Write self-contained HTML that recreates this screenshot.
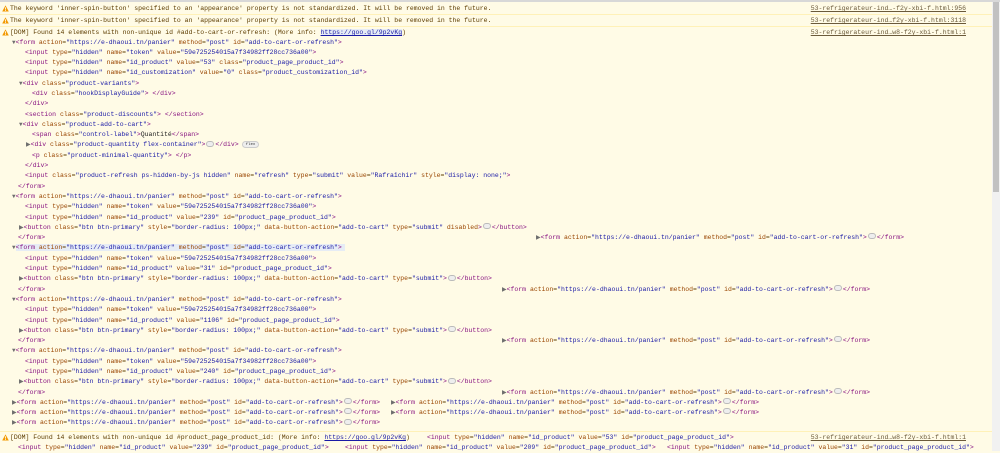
<!DOCTYPE html>
<html><head><meta charset="utf-8"><style>
*{margin:0;padding:0;box-sizing:border-box}
body{width:1000px;height:451px;overflow:hidden;background:#fffbe6;font-family:"Liberation Mono",monospace;font-size:6.48px;color:#5c3c00;position:relative}
.r{position:absolute;left:0;width:992px;height:11px;line-height:11px;white-space:pre}
.w{border-top:1px solid #fff1b8;background:#fffbe6}
.ic{position:absolute;left:2px;top:2px;width:7px;height:7px}
.lk{position:absolute;right:26px;top:0;text-decoration:underline;color:#6b5a3a}
.x{position:absolute;top:0}
.L{height:10.3px;line-height:10.3px;white-space:pre}
.L>div{white-space:pre}
b{font-weight:normal;color:#881280}
i{font-style:normal;color:#994500}
em{font-style:normal;color:#1a1aa6}
.tri{color:#6e6e6e;font-size:6px}
.dots{display:inline-block;width:8px;height:6px;border:1px solid #bbb;border-radius:3px;background:#eee;vertical-align:middle;margin:0 1px;position:relative;top:-1px}
.flex{display:inline-block;padding:0 3px;height:7px;line-height:6px;border:1px solid #ccc;border-radius:4px;background:#eee;font-size:4px;color:#333;vertical-align:middle;margin-left:3px}
.hl{background:#e6ecf5}
.sb{position:absolute;right:0;top:2px;width:8px;height:449px;background:#f1f1f1}
.sb div{position:absolute;left:1px;top:0;width:6px;height:190px;background:#c1c1c1}
</style></head><body>
<div style="position:absolute;left:0;top:0;width:1000px;height:2px;background:#d8d8d8"></div>
<svg width="0" height="0" style="position:absolute"><defs><symbol id="wi" viewBox="0 0 10 10"><path d="M5 0.5L9.7 9.3H0.3Z" fill="#f29900"/><rect x="4.4" y="3.3" width="1.2" height="3.3" fill="#fff"/><rect x="4.4" y="7.2" width="1.2" height="1.2" fill="#fff"/></symbol></defs></svg>

<div class="r" style="top:3px"><svg class="ic"><use href="#wi"/></svg><span class="x" style="left:10px">The keyword 'inner-spin-button' specified to an 'appearance' property is not standardized. It will be removed in the future.</span><span class="lk">53-refrigerateur-ind…-f2y-xbi-f.html:956</span></div>
<div class="r w" style="top:14px"><svg class="ic"><use href="#wi"/></svg><span class="x" style="left:10px">The keyword 'inner-spin-button' specified to an 'appearance' property is not standardized. It will be removed in the future.</span><span class="lk">53-refrigerateur-ind…f2y-xbi-f.html:3118</span></div>
<div class="r w" style="top:26px;height:12px"><svg class="ic"><use href="#wi"/></svg><span class="x" style="left:10px">[DOM] Found 14 elements with non-unique id #add-to-cart-or-refresh: (More info: <span class="hl" style="text-decoration:underline;color:#1a1aa6">https://goo.gl/9p2vKg</span>)</span><span class="lk">53-refrigerateur-ind…w8-f2y-xbi-f.html:1</span></div>

<div style="position:absolute;left:0;top:37.5px;width:992px">
<div class="L" style="padding-left:12px"><span class="tri">▼</span><b>&lt;form</b> <i>action</i>=<em>"https://e-dhaoui.tn/panier"</em> <i>method</i>=<em>"post"</em> <i>id</i>=<em>"add-to-cart-or-refresh"</em><b>&gt;</b></div>
<div class="L" style="padding-left:25px"><b>&lt;input</b> <i>type</i>=<em>"hidden"</em> <i>name</i>=<em>"token"</em> <i>value</i>=<em>"59e725254015a7f34982ff28cc736a00"</em><b>&gt;</b></div>
<div class="L" style="padding-left:25px"><b>&lt;input</b> <i>type</i>=<em>"hidden"</em> <i>name</i>=<em>"id_product"</em> <i>value</i>=<em>"53"</em> <i>class</i>=<em>"product_page_product_id"</em><b>&gt;</b></div>
<div class="L" style="padding-left:25px"><b>&lt;input</b> <i>type</i>=<em>"hidden"</em> <i>name</i>=<em>"id_customization"</em> <i>value</i>=<em>"0"</em> <i>class</i>=<em>"product_customization_id"</em><b>&gt;</b></div>
<div class="L" style="padding-left:19px"><span class="tri">▼</span><b>&lt;div</b> <i>class</i>=<em>"product-variants"</em><b>&gt;</b></div>
<div class="L" style="padding-left:32px"><b>&lt;div</b> <i>class</i>=<em>"hookDisplayGuide"</em><b>&gt;</b> <b>&lt;/div&gt;</b></div>
<div class="L" style="padding-left:25px"><b>&lt;/div&gt;</b></div>
<div class="L" style="padding-left:25px"><b>&lt;section</b> <i>class</i>=<em>"product-discounts"</em><b>&gt;</b> <b>&lt;/section&gt;</b></div>
<div class="L" style="padding-left:19px"><span class="tri">▼</span><b>&lt;div</b> <i>class</i>=<em>"product-add-to-cart"</em><b>&gt;</b></div>
<div class="L" style="padding-left:32px"><b>&lt;span</b> <i>class</i>=<em>"control-label"</em><b>&gt;</b><span style="color:#222">Quantité</span><b>&lt;/span&gt;</b></div>
<div class="L" style="padding-left:26px"><span class="tri">▶</span><b>&lt;div</b> <i>class</i>=<em>"product-quantity flex-container"</em><b>&gt;</b><span class="dots"></span><b>&lt;/div&gt;</b><span class="flex">flex</span></div>
<div class="L" style="padding-left:32px"><b>&lt;p</b> <i>class</i>=<em>"product-minimal-quantity"</em><b>&gt;</b> <b>&lt;/p&gt;</b></div>
<div class="L" style="padding-left:25px"><b>&lt;/div&gt;</b></div>
<div class="L" style="padding-left:25px"><b>&lt;input</b> <i>class</i>=<em>"product-refresh ps-hidden-by-js hidden"</em> <i>name</i>=<em>"refresh"</em> <i>type</i>=<em>"submit"</em> <i>value</i>=<em>"Rafraîchir"</em> <i>style</i>=<em>"display: none;"</em><b>&gt;</b></div>
<div class="L" style="padding-left:18px"><b>&lt;/form&gt;</b></div>
<div class="L" style="padding-left:12px"><span class="tri">▼</span><b>&lt;form</b> <i>action</i>=<em>"https://e-dhaoui.tn/panier"</em> <i>method</i>=<em>"post"</em> <i>id</i>=<em>"add-to-cart-or-refresh"</em><b>&gt;</b></div>
<div class="L" style="padding-left:25px"><b>&lt;input</b> <i>type</i>=<em>"hidden"</em> <i>name</i>=<em>"token"</em> <i>value</i>=<em>"59e725254015a7f34982ff28cc736a00"</em><b>&gt;</b></div>
<div class="L" style="padding-left:25px"><b>&lt;input</b> <i>type</i>=<em>"hidden"</em> <i>name</i>=<em>"id_product"</em> <i>value</i>=<em>"239"</em> <i>id</i>=<em>"product_page_product_id"</em><b>&gt;</b></div>
<div class="L" style="padding-left:19px"><span class="tri">▶</span><b>&lt;button</b> <i>class</i>=<em>"btn btn-primary"</em> <i>style</i>=<em>"border-radius: 100px;"</em> <i>data-button-action</i>=<em>"add-to-cart"</em> <i>type</i>=<em>"submit"</em> <i>disabled</i><b>&gt;</b><span class="dots"></span><b>&lt;/button&gt;</b></div>
<div class="L" style="padding-left:18px;position:relative"><b>&lt;/form&gt;</b><span class="x" style="left:536px"><span class="tri">▶</span><b>&lt;form</b> <i>action</i>=<em>"https://e-dhaoui.tn/panier"</em> <i>method</i>=<em>"post"</em> <i>id</i>=<em>"add-to-cart-or-refresh"</em><b>&gt;</b><span class="dots"></span><b>&lt;/form&gt;</b></span></div>
<div class="L" style="padding-left:12px"><span class="tri">▼</span><span class="hl" style="padding-right:3px"><b>&lt;form</b> <i>action</i>=<em>"https://e-dhaoui.tn/panier"</em> <i>method</i>=<em>"post"</em> <i>id</i>=<em>"add-to-cart-or-refresh"</em><b>&gt;</b></span></div>
<div class="L" style="padding-left:25px"><b>&lt;input</b> <i>type</i>=<em>"hidden"</em> <i>name</i>=<em>"token"</em> <i>value</i>=<em>"59e725254015a7f34982ff28cc736a00"</em><b>&gt;</b></div>
<div class="L" style="padding-left:25px"><b>&lt;input</b> <i>type</i>=<em>"hidden"</em> <i>name</i>=<em>"id_product"</em> <i>value</i>=<em>"31"</em> <i>id</i>=<em>"product_page_product_id"</em><b>&gt;</b></div>
<div class="L" style="padding-left:19px"><span class="tri">▶</span><b>&lt;button</b> <i>class</i>=<em>"btn btn-primary"</em> <i>style</i>=<em>"border-radius: 100px;"</em> <i>data-button-action</i>=<em>"add-to-cart"</em> <i>type</i>=<em>"submit"</em><b>&gt;</b><span class="dots"></span><b>&lt;/button&gt;</b></div>
<div class="L" style="padding-left:18px;position:relative"><b>&lt;/form&gt;</b><span class="x" style="left:502px"><span class="tri">▶</span><b>&lt;form</b> <i>action</i>=<em>"https://e-dhaoui.tn/panier"</em> <i>method</i>=<em>"post"</em> <i>id</i>=<em>"add-to-cart-or-refresh"</em><b>&gt;</b><span class="dots"></span><b>&lt;/form&gt;</b></span></div>
<div class="L" style="padding-left:12px"><span class="tri">▼</span><b>&lt;form</b> <i>action</i>=<em>"https://e-dhaoui.tn/panier"</em> <i>method</i>=<em>"post"</em> <i>id</i>=<em>"add-to-cart-or-refresh"</em><b>&gt;</b></div>
<div class="L" style="padding-left:25px"><b>&lt;input</b> <i>type</i>=<em>"hidden"</em> <i>name</i>=<em>"token"</em> <i>value</i>=<em>"59e725254015a7f34982ff28cc736a00"</em><b>&gt;</b></div>
<div class="L" style="padding-left:25px"><b>&lt;input</b> <i>type</i>=<em>"hidden"</em> <i>name</i>=<em>"id_product"</em> <i>value</i>=<em>"1106"</em> <i>id</i>=<em>"product_page_product_id"</em><b>&gt;</b></div>
<div class="L" style="padding-left:19px"><span class="tri">▶</span><b>&lt;button</b> <i>class</i>=<em>"btn btn-primary"</em> <i>style</i>=<em>"border-radius: 100px;"</em> <i>data-button-action</i>=<em>"add-to-cart"</em> <i>type</i>=<em>"submit"</em><b>&gt;</b><span class="dots"></span><b>&lt;/button&gt;</b></div>
<div class="L" style="padding-left:18px;position:relative"><b>&lt;/form&gt;</b><span class="x" style="left:502px"><span class="tri">▶</span><b>&lt;form</b> <i>action</i>=<em>"https://e-dhaoui.tn/panier"</em> <i>method</i>=<em>"post"</em> <i>id</i>=<em>"add-to-cart-or-refresh"</em><b>&gt;</b><span class="dots"></span><b>&lt;/form&gt;</b></span></div>
<div class="L" style="padding-left:12px"><span class="tri">▼</span><b>&lt;form</b> <i>action</i>=<em>"https://e-dhaoui.tn/panier"</em> <i>method</i>=<em>"post"</em> <i>id</i>=<em>"add-to-cart-or-refresh"</em><b>&gt;</b></div>
<div class="L" style="padding-left:25px"><b>&lt;input</b> <i>type</i>=<em>"hidden"</em> <i>name</i>=<em>"token"</em> <i>value</i>=<em>"59e725254015a7f34982ff28cc736a00"</em><b>&gt;</b></div>
<div class="L" style="padding-left:25px"><b>&lt;input</b> <i>type</i>=<em>"hidden"</em> <i>name</i>=<em>"id_product"</em> <i>value</i>=<em>"240"</em> <i>id</i>=<em>"product_page_product_id"</em><b>&gt;</b></div>
<div class="L" style="padding-left:19px"><span class="tri">▶</span><b>&lt;button</b> <i>class</i>=<em>"btn btn-primary"</em> <i>style</i>=<em>"border-radius: 100px;"</em> <i>data-button-action</i>=<em>"add-to-cart"</em> <i>type</i>=<em>"submit"</em><b>&gt;</b><span class="dots"></span><b>&lt;/button&gt;</b></div>
<div class="L" style="padding-left:18px;position:relative"><b>&lt;/form&gt;</b><span class="x" style="left:502px"><span class="tri">▶</span><b>&lt;form</b> <i>action</i>=<em>"https://e-dhaoui.tn/panier"</em> <i>method</i>=<em>"post"</em> <i>id</i>=<em>"add-to-cart-or-refresh"</em><b>&gt;</b><span class="dots"></span><b>&lt;/form&gt;</b></span></div>
<div class="L" style="padding-left:12px;position:relative"><span class="tri">▶</span><b>&lt;form</b> <i>action</i>=<em>"https://e-dhaoui.tn/panier"</em> <i>method</i>=<em>"post"</em> <i>id</i>=<em>"add-to-cart-or-refresh"</em><b>&gt;</b><span class="dots"></span><b>&lt;/form&gt;</b><span class="x" style="left:391px"><span class="tri">▶</span><b>&lt;form</b> <i>action</i>=<em>"https://e-dhaoui.tn/panier"</em> <i>method</i>=<em>"post"</em> <i>id</i>=<em>"add-to-cart-or-refresh"</em><b>&gt;</b><span class="dots"></span><b>&lt;/form&gt;</b></span></div>
<div class="L" style="padding-left:12px;position:relative"><span class="tri">▶</span><b>&lt;form</b> <i>action</i>=<em>"https://e-dhaoui.tn/panier"</em> <i>method</i>=<em>"post"</em> <i>id</i>=<em>"add-to-cart-or-refresh"</em><b>&gt;</b><span class="dots"></span><b>&lt;/form&gt;</b><span class="x" style="left:391px"><span class="tri">▶</span><b>&lt;form</b> <i>action</i>=<em>"https://e-dhaoui.tn/panier"</em> <i>method</i>=<em>"post"</em> <i>id</i>=<em>"add-to-cart-or-refresh"</em><b>&gt;</b><span class="dots"></span><b>&lt;/form&gt;</b></span></div>
<div class="L" style="padding-left:12px"><span class="tri">▶</span><b>&lt;form</b> <i>action</i>=<em>"https://e-dhaoui.tn/panier"</em> <i>method</i>=<em>"post"</em> <i>id</i>=<em>"add-to-cart-or-refresh"</em><b>&gt;</b><span class="dots"></span><b>&lt;/form&gt;</b></div>
</div>

<div class="r w" style="top:431px"><svg class="ic"><use href="#wi"/></svg><span class="x" style="left:10px">[DOM] Found 14 elements with non-unique id #product_page_product_id: (More info: <span style="text-decoration:underline;color:#1a1aa6">https://goo.gl/9p2vKg</span>)</span><span class="x" style="left:427px"><b>&lt;input</b> <i>type</i>=<em>"hidden"</em> <i>name</i>=<em>"id_product"</em> <i>value</i>=<em>"53"</em> <i>id</i>=<em>"product_page_product_id"</em><b>&gt;</b></span><span class="lk">53-refrigerateur-ind…w8-f2y-xbi-f.html:1</span></div>
<div class="r" style="top:442px"><span class="x" style="left:18px"><b>&lt;input</b> <i>type</i>=<em>"hidden"</em> <i>name</i>=<em>"id_product"</em> <i>value</i>=<em>"239"</em> <i>id</i>=<em>"product_page_product_id"</em><b>&gt;</b></span><span class="x" style="left:345px"><b>&lt;input</b> <i>type</i>=<em>"hidden"</em> <i>name</i>=<em>"id_product"</em> <i>value</i>=<em>"209"</em> <i>id</i>=<em>"product_page_product_id"</em><b>&gt;</b></span><span class="x" style="left:667px"><b>&lt;input</b> <i>type</i>=<em>"hidden"</em> <i>name</i>=<em>"id_product"</em> <i>value</i>=<em>"31"</em> <i>id</i>=<em>"product_page_product_id"</em><b>&gt;</b></span></div>

<div class="sb"><div></div></div>
</body></html>
